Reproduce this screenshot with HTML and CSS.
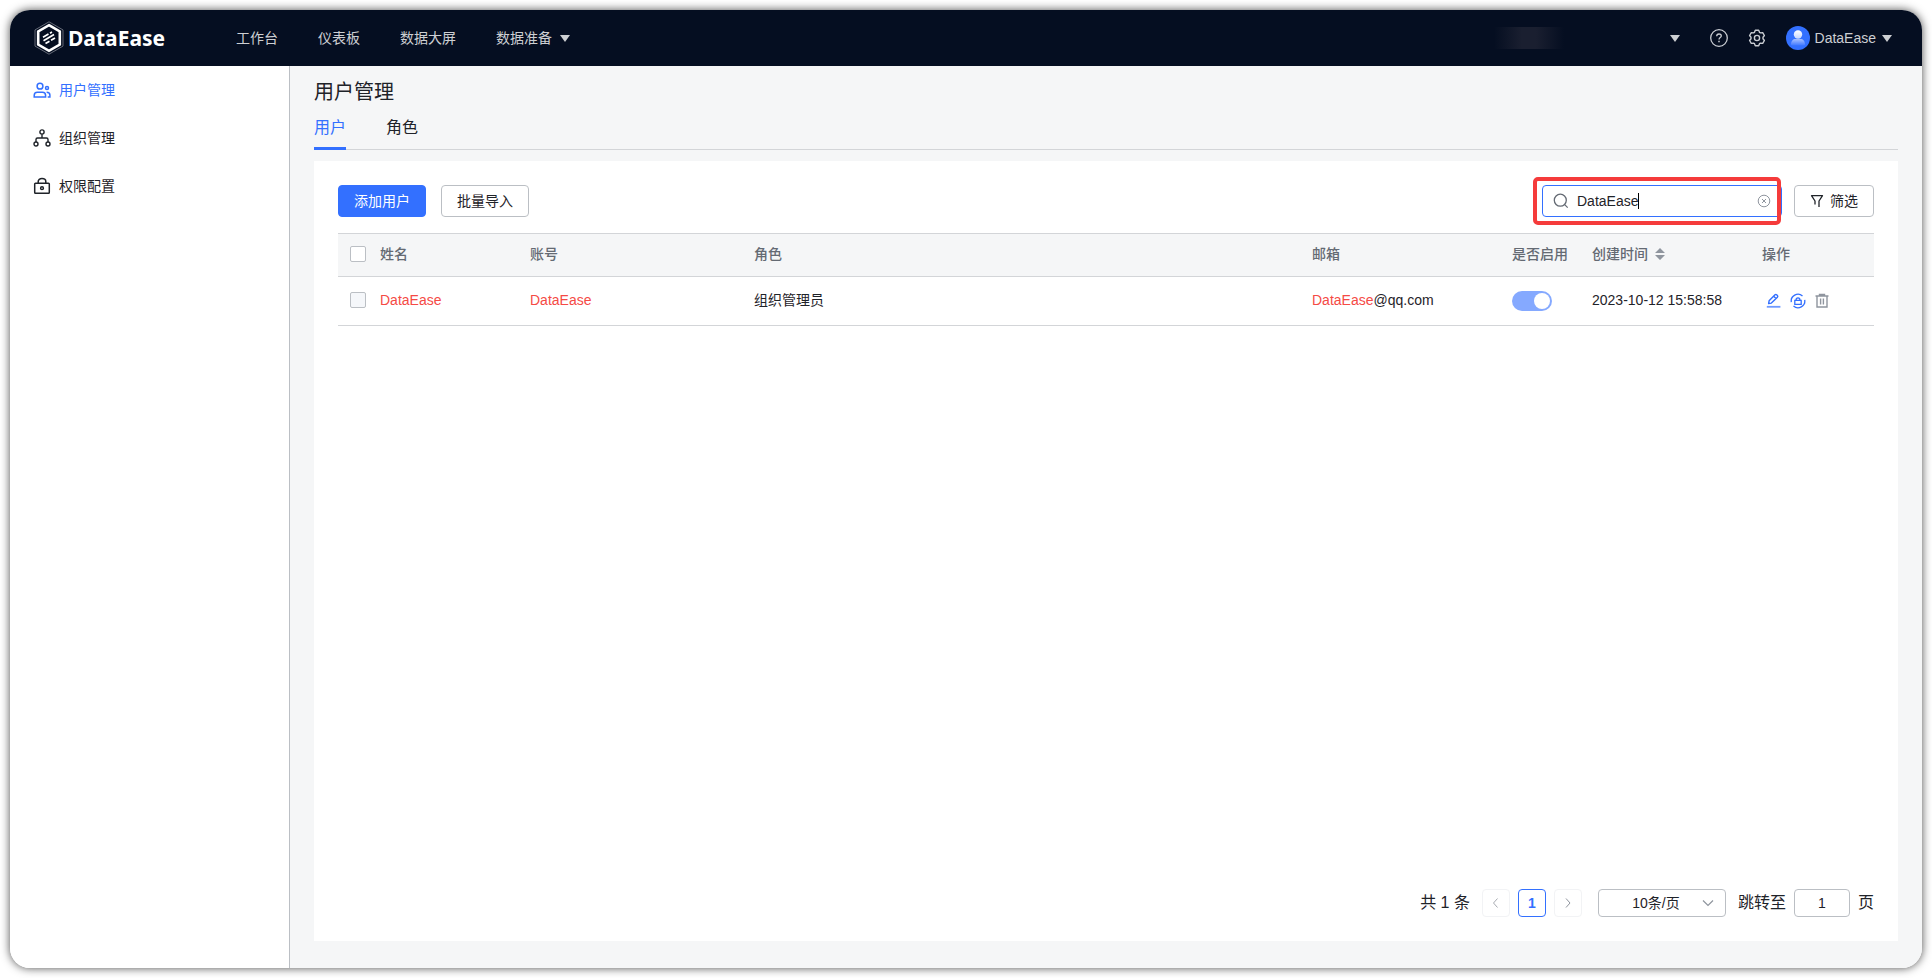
FILE: index.html
```html
<!DOCTYPE html>
<html lang="zh-CN">
<head>
<meta charset="utf-8">
<title>用户管理 - DataEase</title>
<link rel="stylesheet" href="styles.css">
</head>
<body>
<div class="window">
  <header class="topbar">
    <a class="logo" href="#">
      <svg class="logo-mark" viewBox="0 0 30 34" aria-hidden="true">
        <path d="M15 .8 29 8.900v16.200L15 33.200 1 25.100V8.900z" fill="none" stroke="#7d828d" stroke-width=".8"/>
        <path d="M15 4.200 25.800 10.500v13L15 29.800 4.200 23.500v-13z" fill="none" stroke="#fff" stroke-width="2.600"/>
        <path d="M9 16.200l5.500-3.200M16 12.200l2-1.200M9.500 19.800l10.500-6.200M11.500 22.600l4-2.400M17 19.300l4-2.400" stroke="#fff" stroke-width="1.700" fill="none"/>
      </svg>
      <span class="logo-text">DataEase</span>
    </a>
    <nav class="topnav">
      <a href="#">工作台</a>
      <a href="#">仪表板</a>
      <a href="#">数据大屏</a>
      <a href="#" class="has-caret">数据准备<span class="caret"></span></a>
    </nav>
    <div class="top-tools">
      <button class="org-switch" type="button" aria-label="切换组织"><span class="org-name"></span><span class="caret"></span></button>
      <button class="tool help" type="button" aria-label="帮助">
        <svg width="18" height="18" viewBox="0 0 18 18" fill="none" stroke="#c9ccd2" stroke-width="1.300"><circle cx="9" cy="9" r="8.300"/><path d="M6.700 7.300C6.700 5.800 7.700 5 9 5s2.300.8 2.300 2c0 1.500-2.300 1.700-2.300 3.400"/><path d="M9 11.800v1.500" stroke-width="1.500"/></svg>
      </button>
      <button class="tool gear" type="button" aria-label="系统设置">
        <svg width="18" height="18" viewBox="0 0 18 18" fill="none" stroke="#c9ccd2" stroke-width="1.400" stroke-linejoin="round"><path d="M7.300 1.300h3.400l.8 2 1 .6 2.200-.3 1.700 2.900L15 8.300v1.400l1.400 1.800-1.700 2.900-2.200-.3-1 .6-.8 2H7.300l-.8-2-1-.6-2.200.3-1.700-2.900L3 9.700V8.300L1.600 6.500l1.700-2.900 2.200.3 1-.6z"/><circle cx="9" cy="9" r="2.600"/></svg>
      </button>
      <button class="account" type="button">
        <svg width="24" height="24" viewBox="0 0 24 24" aria-hidden="true">
          <defs><linearGradient id="head" x1="0" y1="0" x2="0" y2="1"><stop offset="0" stop-color="#fff"/><stop offset="1" stop-color="#c5d6ff"/></linearGradient>
          <linearGradient id="torso" x1="0" y1="0" x2="0" y2="1"><stop offset="0" stop-color="#a9c1ff"/><stop offset="1" stop-color="#3f78ff"/></linearGradient></defs>
          <circle cx="12" cy="12" r="12" fill="#3370ff"/><circle cx="12" cy="8.500" r="4.200" fill="url(#head)"/><path d="M5 18.500c0-3.500 2-5.500 4.500-5.500h5c2.500 0 4.500 2 4.500 5.500 0 .8-.6 1-1.500 1h-11c-.9 0-1.500-.2-1.500-1z" fill="url(#torso)"/>
        </svg>
        <span>DataEase</span><span class="caret"></span>
      </button>
    </div>
  </header>
  <div class="body">
    <aside class="sidebar">
      <a class="side-item active" href="#">
        <svg width="18" height="18" viewBox="0 0 18 18" fill="none" stroke="currentColor" stroke-width="1.500"><circle cx="7" cy="5.200" r="2.900"/><path d="M1.200 16v-1.600c0-2 1.400-3.200 3.200-3.200h5c1.800 0 3.200 1.200 3.200 3.200V16z"/><circle cx="14" cy="7" r="1.500"/><path d="M13.600 11.200c2 0 3.300 1 3.300 2.800v2h-2.200"/></svg>
        用户管理
      </a>
      <a class="side-item" href="#">
        <svg width="18" height="18" viewBox="0 0 18 18" fill="none" stroke="currentColor" stroke-width="1.400"><circle cx="9" cy="3" r="2.100"/><circle cx="3" cy="15" r="2"/><circle cx="15" cy="15" r="2"/><path d="M9 5.200V9M3 13v-2.500C3 9.500 3.500 9 4.500 9h9c1 0 1.500.5 1.500 1.500V13"/></svg>
        组织管理
      </a>
      <a class="side-item" href="#">
        <svg width="18" height="18" viewBox="0 0 18 18" fill="none" stroke="currentColor" stroke-width="1.500"><rect x="1.700" y="6.200" width="14.600" height="10" rx=".8"/><path d="M5.200 6V4.500C5.200 2.700 6.800 1.500 9 1.500s3.800 1.200 3.800 3V6"/><circle cx="9" cy="11.200" r="1.400"/></svg>
        权限配置
      </a>
    </aside>
    <main class="main">
      <h1 class="title">用户管理</h1>
      <div class="tabs" role="tablist">
        <button class="tab active" type="button" role="tab" aria-selected="true">用户</button>
        <button class="tab" type="button" role="tab" aria-selected="false">角色</button>
      </div>
      <section class="card">
        <div class="toolbar">
          <button class="btn primary" type="button">添加用户</button>
          <button class="btn" type="button">批量导入</button>
          <div class="search">
            <svg class="search-icon" width="16" height="16" viewBox="0 0 16 16" fill="none" stroke="#646a73" stroke-width="1.300"><circle cx="7.300" cy="7.200" r="6"/><path d="M11.700 11.600l3 3"/></svg>
            <input class="search-input" type="text" value="DataEase" aria-label="搜索用户">
            <button class="clear" type="button" aria-label="清空"><svg width="14" height="14" viewBox="0 0 14 14" fill="none" stroke="#8f959e"><circle cx="7" cy="7" r="5.800"/><path d="M5 5l4 4M9 5l-4 4"/></svg></button>
            <span class="text-cursor"></span>
            <span class="highlight"></span>
          </div>
          <button class="btn filter" type="button">
            <svg width="14" height="14" viewBox="0 0 14 14" fill="none" stroke="#1f2329" stroke-width="1.300" stroke-linejoin="round"><path d="M5 10.500V7L1.500 1.700h11L9 7v6"/></svg>筛选
          </button>
        </div>
        <table class="users">
          <colgroup><col class="c-check"><col class="c-name"><col class="c-account"><col><col class="c-mail"><col class="c-enable"><col class="c-time"><col class="c-action"></colgroup>
          <thead>
            <tr><th class="check"><input type="checkbox" aria-label="全选"></th><th>姓名</th><th>账号</th><th>角色</th><th>邮箱</th><th>是否启用</th>
            <th><span class="sortable">创建时间<svg width="10" height="12" viewBox="0 0 10 12" fill="#8f959e" aria-hidden="true"><path d="M5 0l5 5H0zM5 12L0 7h10z"/></svg></span></th><th>操作</th></tr>
          </thead>
          <tbody>
            <tr><td class="check"><input type="checkbox" disabled aria-label="选择 DataEase"></td><td><span class="hit">DataEase</span></td><td><span class="hit">DataEase</span></td><td>组织管理员</td><td><span class="hit">DataEase</span>@qq.com</td>
            <td class="control"><input class="switch" type="checkbox" role="switch" checked disabled aria-label="是否启用"></td>
            <td>2023-10-12 15:58:58</td>
            <td class="control"><div class="actions">
              <button type="button" aria-label="编辑"><svg width="16" height="16" viewBox="0 0 16 16" fill="none" stroke="#3370ff" stroke-width="1.400" stroke-linejoin="round"><path d="M2.600 10.600l.5-2.800L9 1.800c.5-.5 1.100-.5 1.600 0l.8.800c.5.500.5 1.100 0 1.600L5.400 10.100zM7.700 3.200l2.300 2.300"/><path d="M.8 13.800h13.600" stroke="#6f9aff" stroke-width="1.800"/></svg></button>
              <button type="button" aria-label="重置密码"><svg width="16" height="16" viewBox="0 0 16 16" fill="none" stroke="#3370ff" stroke-width="1.300"><path d="M1.300 9.200A6.800 6.800 0 0 1 12.500 3M14.700 6.800A6.800 6.800 0 0 1 3.500 13M1.300 5.500v2M14.700 8.500v2"/><path d="M4.800 7.300h6.400v4H4.800zM6 7.200c0-3 4-3 4 0"/></svg></button>
              <button type="button" aria-label="删除"><svg width="16" height="16" viewBox="0 0 16 16" fill="none" stroke="#8f959e" stroke-width="1.400"><path d="M1.500 3h13M5.500 2.300V1.500h5v.8M3 3v11h10V3M6.600 5.500v6M9.400 5.500v6"/></svg></button>
            </div></td></tr>
          </tbody>
        </table>
        <div class="pagination">
          <span class="total">共 1 条</span>
          <button class="page" type="button" disabled aria-label="上一页"><svg width="12" height="12" viewBox="0 0 12 12" fill="none" stroke="#a8abb2"><path d="M7.500 1.500L3.500 6l4 4.500"/></svg></button>
          <button class="page current" type="button">1</button>
          <button class="page" type="button" disabled aria-label="下一页"><svg width="12" height="12" viewBox="0 0 12 12" fill="none" stroke="#8f959e"><path d="M4 1.500L8 6l-4 4.500"/></svg></button>
          <div class="size-box">
            <select class="size" aria-label="每页条数"><option>10条/页</option></select>
            <svg class="size-arrow" width="12" height="12" viewBox="0 0 12 12" fill="none" stroke="#8f959e" stroke-width="1.200"><path d="M1 3.500l5 5 5-5"/></svg>
          </div>
          <label class="jump">跳转至<input type="text" value="1">页</label>
        </div>
      </section>
    </main>
  </div>
</div>
</body>
</html>
```

FILE: styles.css
```css
* { box-sizing: border-box; }

body {
  margin: 0;
  padding: 10px;
  height: 100vh;
  background: #fff;
  color: #1f2329;
  font: 14px/22px "Liberation Sans", "Noto Sans CJK SC", sans-serif;
}

button, input, select { font: inherit; color: inherit; margin: 0; }
button { padding: 0; border: 0; background: none; }
a { color: inherit; text-decoration: none; }
svg { display: block; flex: none; }

.window {
  display: flex;
  flex-direction: column;
  height: 100%;
  overflow: hidden;
  border-radius: 20px;
  box-shadow: 0 0 10px rgba(0, 0, 0, 0.7);
}

.topbar {
  display: flex;
  align-items: center;
  height: 56px;
  flex: none;
  padding: 0 30px 0 24px;
  background: #050e21;
  color: #cdcfd3;
}

.logo { display: flex; align-items: center; gap: 4px; width: 202px; color: #fff; }
.logo-mark { width: 30px; height: 34px; }
.logo-text { font: bold 21px/32px "Noto Sans", sans-serif; }

.topnav { display: flex; gap: 40px; }
.has-caret { display: flex; align-items: center; gap: 8px; }

.caret {
  border: 5px solid transparent;
  border-top: 7px solid #cdcfd3;
  border-bottom: 0;
}

.top-tools { display: flex; align-items: center; margin-left: auto; }
.org-switch { display: flex; align-items: center; gap: 106px; margin-right: 30px; }
.org-name {
  width: 70px;
  height: 22px;
  background: linear-gradient(90deg, transparent, #1a1f30 40%, #1a1f30 60%, transparent);
}
.help { margin-right: 20px; }
.gear { margin-right: 20px; }
.account { display: flex; align-items: center; gap: 5px; }
.account .caret { margin-left: 1px; }

.body { display: flex; flex: 1; min-height: 0; }

.sidebar {
  display: flex;
  flex-direction: column;
  flex: none;
  width: 280px;
  border-right: 1px solid #bbbfc4;
  background: #fff;
}
.side-item {
  display: flex;
  align-items: center;
  gap: 8px;
  height: 48px;
  padding-left: 23px;
}
.side-item.active { color: #3370ff; }

.main {
  display: flex;
  flex-direction: column;
  flex: 1;
  min-width: 0;
  padding: 12px 24px 27px;
  background: #f5f6f7;
}
.title { margin: 0; font-size: 20px; line-height: 28px; font-weight: 400; }

.tabs {
  display: flex;
  gap: 40px;
  height: 44px;
  border-bottom: 1px solid #d3d5d8;
}
.tab {
  height: 44px;
  padding-top: 2px;
  border-bottom: 3px solid transparent;
  font-size: 16px;
  line-height: 24px;
}
.tab.active { color: #3370ff; border-bottom-color: #3370ff; }

.card {
  display: flex;
  flex-direction: column;
  flex: 1;
  margin-top: 11px;
  padding: 24px;
  background: #fff;
}

.toolbar { display: flex; margin-bottom: 16px; }
.btn {
  width: 88px;
  height: 32px;
  border: 1px solid #bbbfc4;
  border-radius: 4px;
  background: #fff;
}
.btn + .btn { margin-left: 15px; }
.btn.primary { border-color: #3370ff; background: #3370ff; color: #fff; }
.filter {
  display: flex;
  align-items: center;
  justify-content: center;
  gap: 6px;
  width: 80px;
  margin-left: 12px;
}

.search {
  position: relative;
  display: flex;
  align-items: center;
  width: 240px;
  height: 32px;
  margin-left: auto;
  padding: 0 10px;
  border: 1px solid #3370ff;
  border-radius: 4px;
}
.search-input {
  flex: 1;
  min-width: 0;
  padding: 0 0 0 8px;
  border: 0;
  outline: 0;
  background: none;
}
.text-cursor {
  position: absolute;
  left: 95px;
  top: 7px;
  width: 1px;
  height: 16px;
  background: #000;
}
.highlight {
  position: absolute;
  inset: -9px 0 -9px -10px;
  border: 4px solid #f53b3b;
  border-radius: 5px;
  pointer-events: none;
}

.users { width: 100%; table-layout: fixed; border-collapse: collapse; }
.c-check { width: 30px; }
.c-name { width: 150px; }
.c-account { width: 224px; }
.c-mail { width: 200px; }
.c-enable { width: 80px; }
.c-time { width: 170px; }
.c-action { width: 124px; }
.users th, .users td { padding: 0 0 2px 12px; text-align: left; white-space: nowrap; }
.users .control { padding-bottom: 0; }
.users th {
  height: 43px;
  border-top: 1px solid #d3d5d8;
  border-bottom: 1px solid #d3d5d8;
  background: #f5f6f7;
  color: #646a73;
  font-weight: 500;
}
.users td { height: 49px; border-bottom: 1px solid #d3d5d8; }
.check input {
  appearance: none;
  display: block;
  width: 16px;
  height: 16px;
  border: 1px solid #bbbfc4;
  border-radius: 2px;
  background: #fff;
}
.check input:disabled { background: #f5f7fa; }
.hit { color: #f54a45; }
.sortable { display: flex; align-items: center; gap: 7px; }

.switch {
  appearance: none;
  display: block;
  width: 40px;
  height: 20px;
  padding: 2px;
  border-radius: 10px;
  background: #85a9ff;
}
.switch::before {
  content: "";
  display: block;
  width: 16px;
  height: 16px;
  margin-left: auto;
  border-radius: 50%;
  background: #fff;
}
.actions { display: flex; gap: 8px; padding-left: 4px; }

.pagination {
  display: flex;
  align-items: center;
  justify-content: flex-end;
  margin-top: auto;
}
.total { margin-right: 12px; font-size: 16px; }
.page {
  display: flex;
  align-items: center;
  justify-content: center;
  width: 28px;
  height: 28px;
  margin-right: 8px;
  border: 1px solid #f2f3f5;
  border-radius: 4px;
}
.page.current { border-color: #3370ff; color: #3370ff; font-weight: bold; }
.size-box { position: relative; margin: 0 12px 0 8px; }
.size {
  appearance: none;
  display: block;
  width: 128px;
  height: 28px;
  padding: 0 24px 0 12px;
  border: 1px solid #bbbfc4;
  border-radius: 4px;
  background: #fff;
  text-align: center;
  text-align-last: center;
}
.size-arrow { position: absolute; right: 12px; top: 8px; pointer-events: none; }
.jump { display: flex; align-items: center; gap: 8px; font-size: 16px; }
.jump input {
  width: 56px;
  height: 28px;
  border: 1px solid #bbbfc4;
  border-radius: 4px;
  font-size: 14px;
  text-align: center;
}
```
